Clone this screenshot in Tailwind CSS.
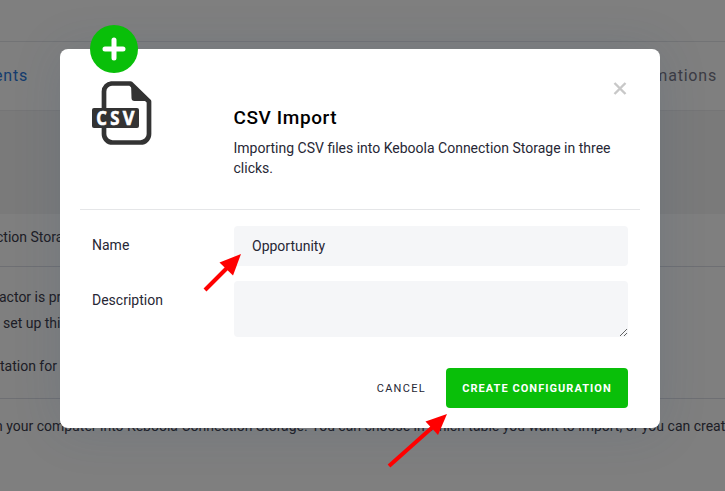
<!DOCTYPE html>
<html lang="en">
<head>
<meta charset="utf-8">
<title>CSV Import</title>
<script src="https://cdn.jsdelivr.net/npm/@tailwindcss/browser@4"></script>
</head>
<body class="relative h-[491px] w-[725px] overflow-hidden bg-white font-[Roboto,sans-serif] text-sm text-[#272735]">
  <main class="flex h-[491px] flex-col whitespace-nowrap text-[#3c3c4c]">
    <header class="h-[42px] border-b border-[#e4e6ea]"></header>
    <nav class="flex h-[68px] items-center justify-between pr-[8px] text-base tracking-[0.8px]">
      <a class="-ml-[6px] text-[#2a78dc]">ents</a>
      <a class="text-[#787888]">mations</a>
    </nav>
    <div class="h-[104px] border-t border-[#eaebec] bg-[#f5f5f5]"></div>
    <section class="flex h-[53px] items-center border-b border-[#dcdfe6] pb-[6px]"><span class="-ml-[4px]">ction Stora</span></section>
    <section class="h-[132px] border-b border-[#dcdfe6] pt-[17px] leading-[26px]">
      <p class="-ml-px">actor is pr</p>
      <p class="pl-[3px]">set up thi</p>
      <p class="mt-[17px]">tation for</p>
    </section>
    <p class="-ml-[5px] pt-[14px] leading-[26px]">n your computer into Keboola Connection Storage. You can choose in which table you want to import, or you can creat</p>
  </main>

  <div class="absolute inset-0 bg-black/50"></div>

  <div class="absolute left-[60px] top-[49px] h-[379px] w-[600px] rounded-lg bg-white px-5 shadow-[0_2px_50px_rgba(40,80,120,0.14)]">
    <div class="flex h-[161px] border-b border-[#e5e6e8] pl-3">
      <svg class="mt-8 h-16 w-[60px] shrink-0" viewBox="0 0 60 64">
        <path d="M19 2.500h19.500L57 20.500V53a8.500 8.500 0 0 1-8.500 8.500H20.500a8.500 8.500 0 0 1-8.500-8.500V10.500a8 8 0 0 1 8-8z" fill="#fff" stroke="#333" stroke-width="4.700" stroke-linejoin="round"/>
        <path d="M39 1.500L58.500 20H42.500a3 3 0 0 1-3-3z" fill="#333"/>
        <rect x="0" y="27" width="47" height="20" rx="2" fill="#333"/>
        <g fill="#fff" stroke="#fff" stroke-width=".6" font-family="Open Sans, sans-serif" font-weight="700" font-size="19">
          <text transform="translate(4.200 44) scale(.88 1)">C</text>
          <text transform="translate(18.300 44) scale(.88 1)">S</text>
          <text transform="translate(30.800 44) scale(.95 1)">V</text>
        </g>
      </svg>
      <div class="ml-[81.500px] w-[394px] pt-[57px]">
        <h1 class="text-[19px] font-medium leading-6 tracking-[0.600px] text-black">CSV Import</h1>
        <p class="mt-2 leading-5">Importing CSV files into Keboola Connection Storage in three clicks.</p>
      </div>
    </div>
    <form class="px-3 pt-4">
      <div class="flex">
        <label class="w-[142px] pt-[9px]">Name</label>
        <input class="h-10 w-[394px] rounded bg-[#f5f6f8] px-[18px] outline-none" value="Opportunity">
      </div>
      <div class="mt-[15px] flex">
        <label class="w-[142px] pt-[9px]">Description</label>
        <textarea class="h-14 w-[394px] resize rounded bg-[#f5f6f8] outline-none"></textarea>
      </div>
      <div class="mt-[31px] flex justify-end text-[11px]">
        <button type="button" class="mr-5 pt-px tracking-[1.300px]">CANCEL</button>
        <button type="button" class="h-10 w-[182px] rounded bg-[#09bf09] pt-px font-bold tracking-[1.040px] text-white">CREATE CONFIGURATION</button>
      </div>
    </form>
    <svg class="absolute right-[33px] top-[32px] h-[14px] w-[14px]" viewBox="0 0 14 14" fill="none" stroke="#c8c8c8" stroke-width="2.400"><path d="M1.500 2l11 11M12.500 2l-11 11"/></svg>
  </div>

  <svg class="absolute left-[90px] top-[25px] h-12 w-12" viewBox="0 0 48 48">
    <circle cx="24" cy="24" r="24" fill="#09bf09"/>
    <path d="M15 24h18M24 15v18" stroke="#fff" stroke-width="5" stroke-linecap="round"/>
  </svg>
  <svg class="pointer-events-none absolute inset-0" width="725" height="491" viewBox="0 0 725 491">
    <g stroke="#f00" stroke-width="4"><path d="M205 290L230 265"/><path d="M389 466L435 425"/></g>
    <g fill="#f00"><path d="M241 254l-21.500 8.500L233 275.500z"/><path d="M447 414l-21.500 7.500L438 435z"/></g>
  </svg>
</body>
</html>
